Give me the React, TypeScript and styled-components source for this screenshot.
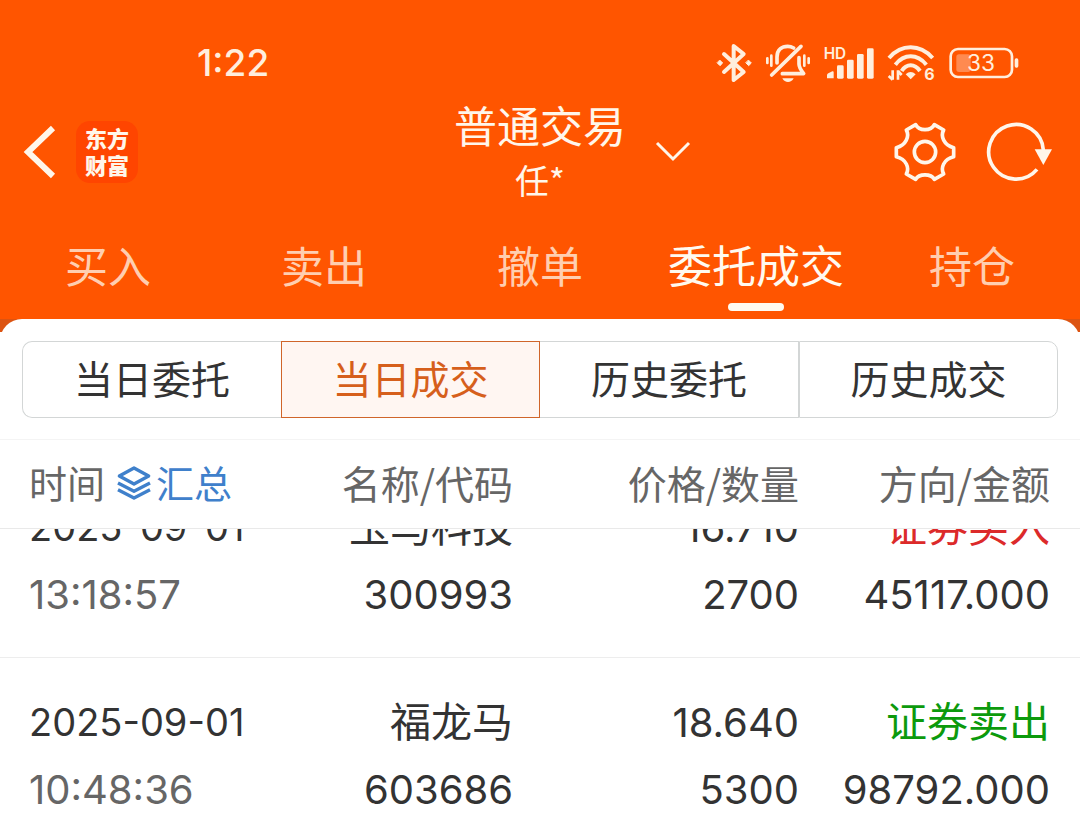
import React from "react";
import styled, { createGlobalStyle } from "styled-components";

const cjk = '"Noto Sans CJK SC", "Noto Sans", sans-serif';
const latin = 'Inter, "Noto Sans CJK SC", sans-serif';

const GlobalStyle = createGlobalStyle`
  *, *::before, *::after { box-sizing: border-box; }
  body { margin: 0; background: #fff; font-family: ${cjk}; color: #333; }
  button { border: 0; padding: 0; margin: 0; background: none; font: inherit; color: inherit; cursor: pointer; }
  svg { display: block; flex: none; overflow: visible; }
`;

const Page = styled.div`
  height: 100vh;
  overflow: hidden;
  display: flex;
  flex-direction: column;
`;

const Header = styled.header`
  flex: none;
  background: #ff5500;
  color: #fff6ea;
`;

const StatusBar = styled.div`
  display: flex;
  align-items: center;
  justify-content: space-between;
  height: 92px;
  padding: 34px 61px 0 197px;
  color: #ffeedd;
`;

const Clock = styled.time`
  font: 500 37px/56px ${latin};
`;

const StatusIcons = styled.div`
  display: flex;
  align-items: center;
  gap: 12px;
`;

const NavBar = styled.nav`
  display: grid;
  grid-template-columns: 1fr auto 1fr;
  align-items: center;
  height: 120px;
  padding: 0 22px;
`;

const NavGroup = styled.div<{ $end?: boolean }>`
  display: flex;
  align-items: center;
  justify-content: ${(p) => (p.$end ? "flex-end" : "flex-start")};
  gap: ${(p) => (p.$end ? 30 : 20)}px;
  padding-right: ${(p) => (p.$end ? 5 : 0)}px;
`;

const Logo = styled.span`
  display: grid;
  place-content: center;
  width: 62px;
  height: 62px;
  padding-bottom: 2px;
  border-radius: 14px;
  background: #ff4500;
  font-size: 22px;
  font-weight: 900;
  line-height: 27px;
  text-align: center;
`;

const AccountButton = styled.button`
  display: grid;
  grid-template-columns: 34px auto 34px;
  align-items: center;
  gap: 30px;
`;

const AccountText = styled.span`
  grid-column: 2;
  display: flex;
  flex-direction: column;
  align-items: center;
`;

const AccountTitle = styled.span`
  font-size: 43px;
  line-height: 56px;
`;

const AccountOwner = styled.span`
  font-size: 34px;
  line-height: 56px;
`;

const Tabs = styled.div`
  display: grid;
  grid-template-columns: repeat(5, 1fr);
`;

const Tab = styled.button<{ $active?: boolean }>`
  display: flex;
  flex-direction: column;
  align-items: center;
  gap: 11px;
  padding: 24px 0 8px;
  font-size: ${(p) => (p.$active ? 44 : 43)}px;
  line-height: 56px;
  color: ${(p) => (p.$active ? "#fffaf0" : "#ffceb0")};

  &::after {
    content: "";
    width: 56px;
    height: 8px;
    border-radius: 4px;
    background: ${(p) => (p.$active ? "#fffaf0" : "transparent")};
  }
`;

const SheetBackdrop = styled.main`
  flex: 1;
  min-height: 0;
  background: linear-gradient(#dc5412 13px, #fff 13px);
`;

const Sheet = styled.div`
  height: 100%;
  overflow: hidden;
  border-radius: 22px 22px 0 0;
  background: #fff;
`;

const Segments = styled.div`
  display: grid;
  grid-template-columns: repeat(4, 1fr);
  margin: 22px 22px 21px;
`;

const Segment = styled.button<{ $active?: boolean }>`
  height: 77px;
  padding-bottom: 6px;
  border: 1px solid ${(p) => (p.$active ? "#d0652a" : "#d3d6d6")};
  background: ${(p) => (p.$active ? "#fff6f2" : "#fff")};
  color: ${(p) => (p.$active ? "#d65f1c" : "#333")};
  font-size: 39px;
  line-height: 56px;

  &:first-child { border-right: 0; border-radius: 10px 0 0 10px; }
  &:nth-child(3) { border-left: 0; }
  &:last-child { border-radius: 0 10px 10px 0; }
`;

const Table = styled.table`
  display: block;
`;

const TableHead = styled.thead`
  display: block;
  position: relative;
  z-index: 1;
  background: #fff;
  border-top: 1px solid #f4f4f4;
  border-bottom: 1px solid #e9e9e9;
`;

/* The list is scrolled so that the first record sits partly under the head. */
const TableBody = styled.tbody`
  display: block;
  margin-top: -66px;
`;

const Row = styled.tr`
  display: grid;
  grid-template-columns: 235fr 249fr 286fr 251fr;
  padding: 0 30px 0 29px;

  ${TableBody} & {
    padding-top: 31px;
    padding-bottom: 29px;
    border-bottom: 1px solid #ededed;
  }
`;

const HeadCell = styled.th`
  display: flex;
  align-items: center;
  justify-content: flex-end;
  gap: 11px;
  height: 88px;
  padding: 0 0 4px;
  color: #666;
  font-size: 39px;
  font-weight: 400;
  line-height: 56px;
  white-space: nowrap;

  &:first-child {
    justify-content: flex-start;
    font-size: 38px;
  }
`;

const SummaryButton = styled.button`
  display: flex;
  align-items: center;
  gap: 4px;
  color: #3f80cb;
`;

const Cell = styled.td`
  padding: 0;
  text-align: right;
  white-space: nowrap;
  font-family: ${latin};
  font-size: 40px;
  line-height: 67px;

  &:first-child { text-align: left; }
`;

const Line = styled.div<{ $tone?: "muted" | "buy" | "sell" }>`
  height: 67px;
  color: ${(p) =>
    p.$tone === "muted" ? "#666" : p.$tone === "buy" ? "#dc2a2a" : p.$tone === "sell" ? "#0c9a0c" : "#333"};
`;

const DateLine = styled(Line)`
  font-size: 38px;
`;

const LabelLine = styled(Line)`
  font-size: 41px;
`;

const SvgText = styled.text`
  font-family: Inter, sans-serif;
  fill: currentColor;
`;

const Bluetooth = () => (
  <svg width="38" height="42" viewBox="50 33 114 126" fill="none" stroke="currentColor" strokeWidth="12" strokeLinejoin="round" strokeLinecap="round">
    <path d="M77 69 136 123 106 147V45L136 69 77 123" />
    <path d="M65 88l8 8-8 8-8-8zM151 88l8 8-8 8-8-8z" fill="currentColor" strokeWidth="3" />
  </svg>
);

const MutedBell = () => (
  <svg width="46" height="40" viewBox="204 38 138 120" fill="none" stroke="currentColor" strokeWidth="11" strokeLinecap="round" strokeLinejoin="round">
    <path d="M312 48 224 134" />
    <path d="M240 98V80C240 58 255 48 272 48C279 48 285 50 290 53" />
    <path d="M306 82V101C306 112 313 121 320 130H256" />
    <path d="M256 144H290C286 152 280 155 273 155S260 152 256 144Z" fill="currentColor" stroke="none" />
    <path d="M211 84V98M223 76V106M322 76V106M335 84V98" strokeWidth="8" />
  </svg>
);

const Signal = () => (
  <svg width="52" height="38" viewBox="372 40 156 114" fill="currentColor">
    <SvgText x="374" y="84" fontSize="46" fontWeight="600">HD</SvgText>
    <path d="M384 143V134Q384 130 388 128L400 122Q404 121 404 125V143Z" />
    <rect x="414" y="104" width="20" height="40" rx="4" />
    <rect x="444" y="87" width="20" height="57" rx="4" />
    <rect x="474" y="70" width="20" height="74" rx="4" />
    <rect x="504" y="53" width="20" height="91" rx="4" />
  </svg>
);

const Wifi = () => (
  <svg width="50" height="42" viewBox="561 36 150 126" fill="none" stroke="currentColor" strokeWidth="12">
    <path d="M567 84Q595 52 632 52T698 84" />
    <path d="M586 104Q606 79 632 79T679 104" />
    <path d="M605 123Q616 106 632 106T660 123" />
    <path d="M617 133Q632 119 647 133L632 148Z" fill="currentColor" stroke="none" />
    <path d="M578 121V149M566 138L578 149M594 149V121M594 123L605 135" strokeWidth="8" />
    <SvgText x="673" y="149" fontSize="48" fontWeight="700" stroke="none">6</SvgText>
  </svg>
);

const Battery = () => (
  <svg width="70" height="32" viewBox="745 48 210 96" fill="none" stroke="currentColor">
    <rect x="750" y="54" width="184" height="84" rx="22" strokeWidth="8" />
    <rect x="767" y="70" width="43" height="53" rx="8" fill="#ff8a50" stroke="none" />
    <rect x="942" y="82" width="11" height="28" rx="5" fill="currentColor" stroke="none" />
    <SvgText x="799" y="121" fontSize="68" fontWeight="400" stroke="none">33</SvgText>
  </svg>
);

const BackIcon = () => (
  <svg width="34" height="54" viewBox="0 0 34 54" fill="none" stroke="currentColor" strokeWidth="6">
    <path d="M31 3 6 27 31 51" />
  </svg>
);

const ChevronDown = () => (
  <svg width="34" height="22" viewBox="0 0 34 22" fill="none" stroke="currentColor" strokeWidth="3">
    <path d="M1 2 17 18 33 2" />
  </svg>
);

const Gear = () => (
  <svg width="62" height="62" viewBox="101 60 186 186" fill="none" stroke="currentColor" strokeWidth="11" strokeLinejoin="round">
    <path d="M166 71C176 91 212 91 222 71L250 87C240 105 250 132 280 140V167C250 174 240 201 250 219L222 235C212 217 176 217 166 235L138 219C148 201 138 174 108 167V140C138 132 148 105 138 87Z" />
    <circle cx="194" cy="153" r="32" />
  </svg>
);

const Refresh = () => (
  <svg width="67" height="62" viewBox="378 63 201 186" fill="none" stroke="currentColor" strokeWidth="11">
    <path d="M550 150A82 82 0 1 0 531 208" />
    <path d="M524 148H576L550 195Z" fill="currentColor" stroke="none" />
  </svg>
);

const Layers = () => (
  <svg width="36" height="36" viewBox="350 107 108 108" fill="none" stroke="currentColor" strokeWidth="10" strokeLinejoin="round">
    <path d="M404 119 448 143 404 167 360 143Z" />
    <path d="M356 164 404 189 452 164M356 184 404 209 452 184" />
  </svg>
);

const tabs = ["买入", "卖出", "撤单", "委托成交", "持仓"];
const segments = ["当日委托", "当日成交", "历史委托", "历史成交"];

type Trade = {
  date: string;
  time: string;
  name: string;
  code: string;
  price: string;
  quantity: string;
  side: "buy" | "sell";
  amount: string;
};

const trades: Trade[] = [
  { date: "2025-09-01", time: "13:18:57", name: "玉马科技", code: "300993", price: "16.710", quantity: "2700", side: "buy", amount: "45117.000" },
  { date: "2025-09-01", time: "10:48:36", name: "福龙马", code: "603686", price: "18.640", quantity: "5300", side: "sell", amount: "98792.000" },
];

export default function App() {
  return (
    <Page>
      <GlobalStyle />
      <Header>
        <StatusBar>
          <Clock>1:22</Clock>
          <StatusIcons>
            <Bluetooth />
            <MutedBell />
            <Signal />
            <Wifi />
            <Battery />
          </StatusIcons>
        </StatusBar>
        <NavBar>
          <NavGroup>
            <button aria-label="返回"><BackIcon /></button>
            <Logo>东方<br />财富</Logo>
          </NavGroup>
          <AccountButton>
            <AccountText>
              <AccountTitle>普通交易</AccountTitle>
              <AccountOwner>任*</AccountOwner>
            </AccountText>
            <ChevronDown />
          </AccountButton>
          <NavGroup $end>
            <button aria-label="设置"><Gear /></button>
            <button aria-label="刷新"><Refresh /></button>
          </NavGroup>
        </NavBar>
        <Tabs>
          {tabs.map((label) => (
            <Tab key={label} $active={label === "委托成交"}>{label}</Tab>
          ))}
        </Tabs>
      </Header>
      <SheetBackdrop>
        <Sheet>
          <Segments>
            {segments.map((label) => (
              <Segment key={label} $active={label === "当日成交"}>{label}</Segment>
            ))}
          </Segments>
          <Table>
            <TableHead>
              <Row>
                <HeadCell>
                  时间
                  <SummaryButton><Layers />汇总</SummaryButton>
                </HeadCell>
                <HeadCell>名称/代码</HeadCell>
                <HeadCell>价格/数量</HeadCell>
                <HeadCell>方向/金额</HeadCell>
              </Row>
            </TableHead>
            <TableBody>
              {trades.map((t) => (
                <Row key={t.code}>
                  <Cell>
                    <DateLine>{t.date}</DateLine>
                    <Line $tone="muted">{t.time}</Line>
                  </Cell>
                  <Cell>
                    <LabelLine>{t.name}</LabelLine>
                    <Line>{t.code}</Line>
                  </Cell>
                  <Cell>
                    <Line>{t.price}</Line>
                    <Line>{t.quantity}</Line>
                  </Cell>
                  <Cell>
                    <LabelLine $tone={t.side}>{t.side === "buy" ? "证券买入" : "证券卖出"}</LabelLine>
                    <Line>{t.amount}</Line>
                  </Cell>
                </Row>
              ))}
            </TableBody>
          </Table>
        </Sheet>
      </SheetBackdrop>
    </Page>
  );
}
